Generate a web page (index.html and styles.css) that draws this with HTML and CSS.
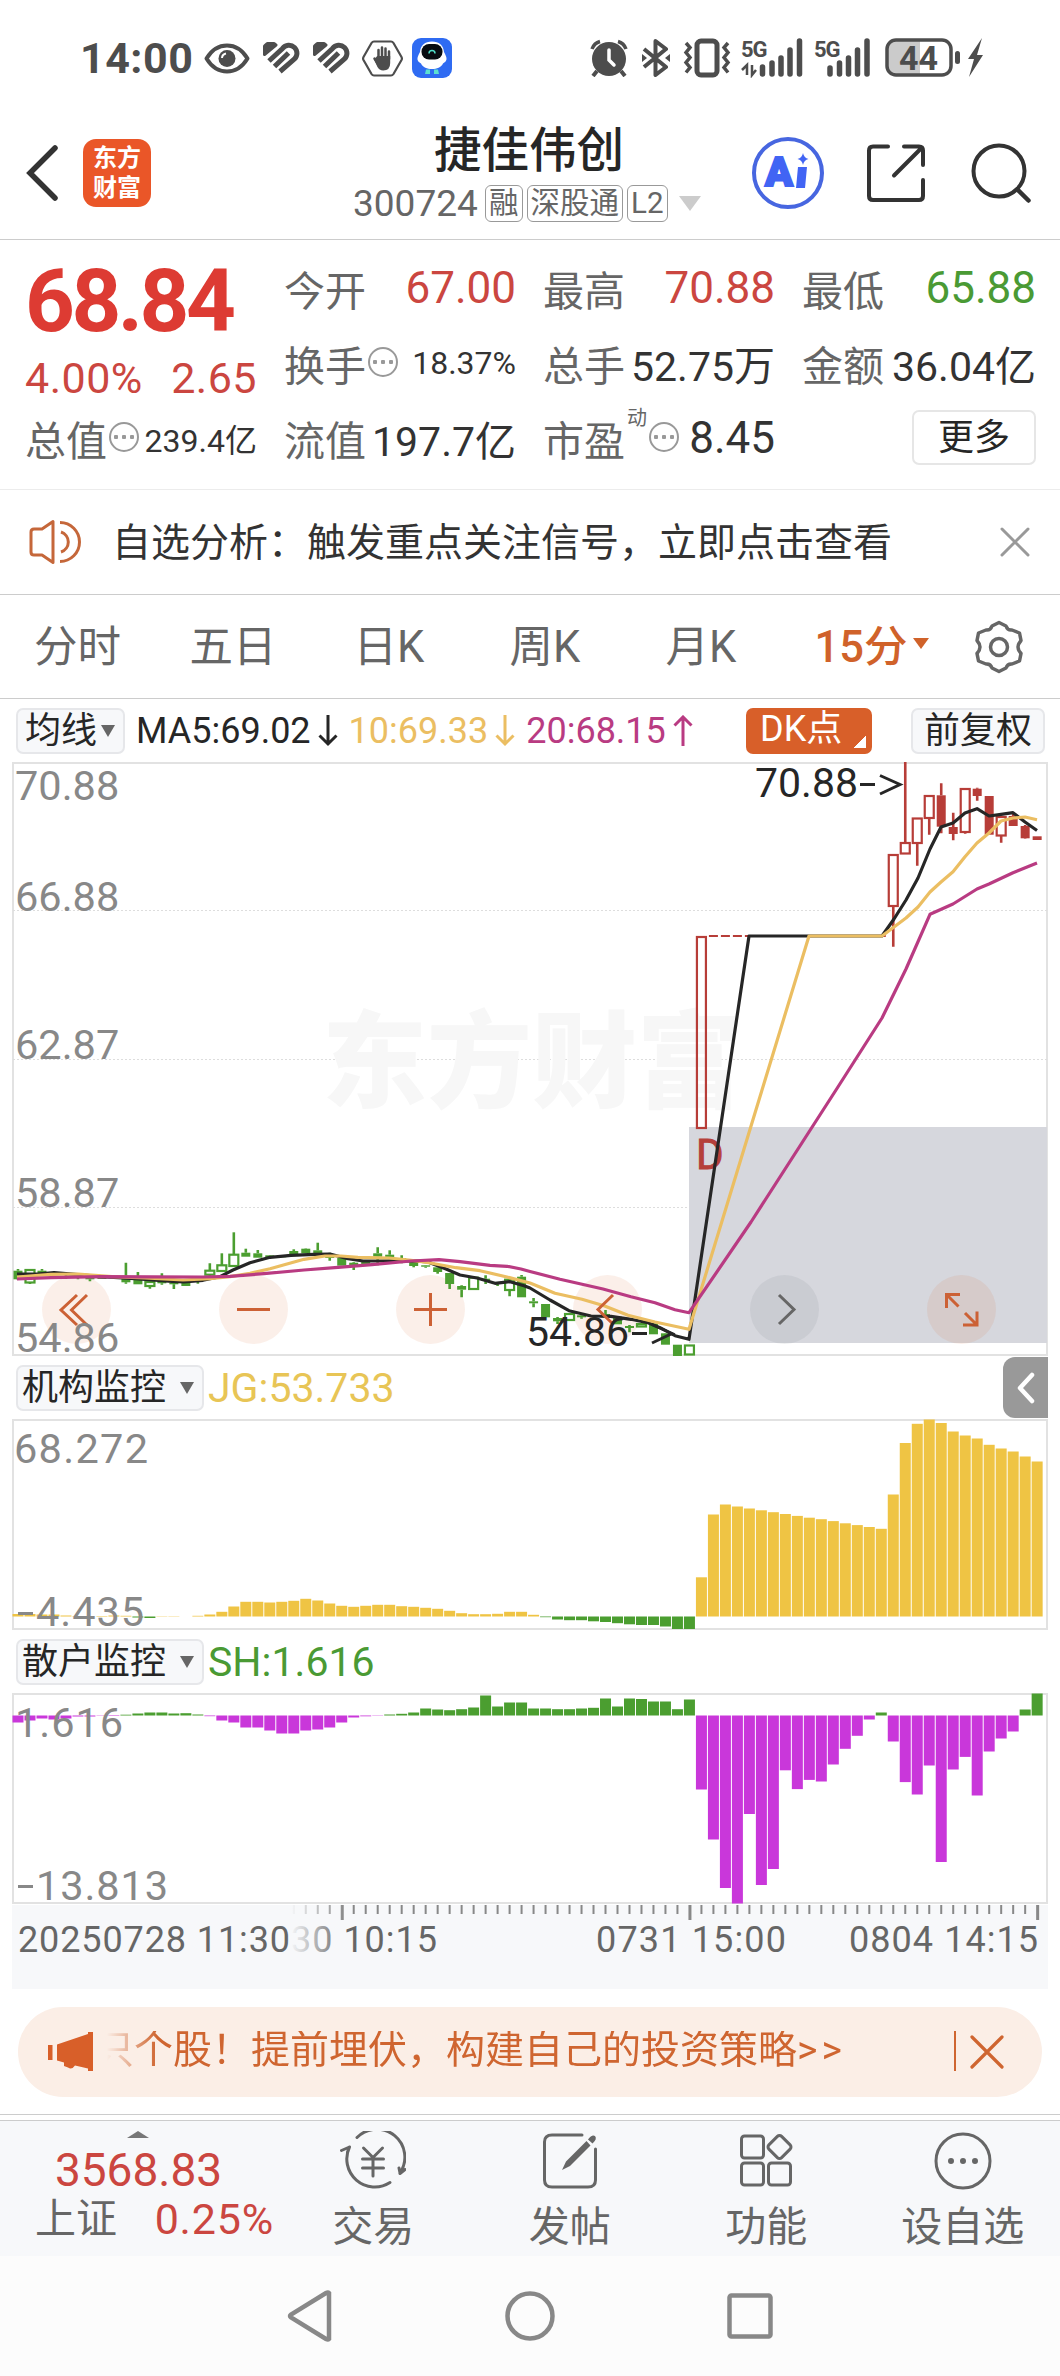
FILE: index.html
```html
<!DOCTYPE html>
<html lang="zh-CN">

<head>
  <meta charset="UTF-8">
  <meta name="viewport" content="width=device-width, initial-scale=1.0">
  <title>捷佳伟创 300724</title>

  <link rel="stylesheet" href="styles.css">
</head>

<body>
  <div class="status">
    <span class="clock">14:00</span>
    <svg class="st-eye" width="46" height="31" viewBox="0 0 46 31">
      <path d="M2.5 15.5C8 6.500 15 2.500 23 2.500s15 4 20.500 13C38 24.500 31 28.500 23 28.500S8 24.500 2.500 15.500z" fill="none" stroke="#4d4d4d" stroke-width="4" stroke-linejoin="round" />
      <circle cx="23" cy="15.500" r="8.500" fill="#4d4d4d" />
      <path d="M18 15a5 5 0 0 1 4-4.500" fill="none" stroke="#fff" stroke-width="2" />
    </svg>
    <svg class="st-heart" width="37" height="32" viewBox="0 0 37 32">
      <path d="M1.500 12.500A7.500 7.500 0 0 1 13 3z" fill="#4d4d4d" stroke="#4d4d4d" stroke-width="3" stroke-linejoin="round" />
      <path d="M6 19L19.500 6.500a8 8 0 0 1 12-1a8 8 0 0 1 0 11.500L17 29.500M11.500 24.500L25.500 11" fill="none" stroke="#4d4d4d" stroke-width="5" />
    </svg>
    <svg class="st-heart" width="37" height="32" viewBox="0 0 37 32">
      <path d="M1.500 12.500A7.500 7.500 0 0 1 13 3z" fill="#4d4d4d" stroke="#4d4d4d" stroke-width="3" stroke-linejoin="round" />
      <path d="M6 19L19.500 6.500a8 8 0 0 1 12-1a8 8 0 0 1 0 11.500L17 29.500M11.500 24.500L25.500 11" fill="none" stroke="#4d4d4d" stroke-width="5" />
    </svg>
    <svg class="st-hand" width="41" height="37" viewBox="0 0 41 37">
      <path d="M12 1.500h17q1.500 0 2.500 1.500l8 14q.8 1.500 0 3l-8 14q-1 1.500-2.500 1.500H12q-1.500 0-2.500-1.500l-8-14q-.8-1.500 0-3l8-14q1-1.500 2.500-1.500z" fill="none" stroke="#4d4d4d" stroke-width="2.200" />
      <path d="M16.500 19V10M20 18V7.500M23.500 18V8.500M27 19v-7.500M12.500 18.500l3 5" stroke="#4d4d4d" stroke-width="2.500" stroke-linecap="round" />
      <path d="M15.200 16h13v7q0 7.500-7 7.500q-4 0-6-4l-3-7z" fill="#4d4d4d" />
    </svg>
    <svg class="st-bot" width="40" height="40" viewBox="0 0 40 40">
      <rect width="40" height="40" rx="9" fill="#2f6bf2" />
      <path d="M20 3.500c7 0 11.500 4 12 10.500c4 7 3 9-1 11.500C29 29.500 25 31 20 31s-9-1.500-11-5.500C5 23 4 21 8 14C8.500 7.500 13 3.500 20 3.500z" fill="#fff" />
      <rect x="9.500" y="6" width="21" height="15.500" rx="7.500" fill="#080c12" />
      <path d="M17 15.500a3 3 0 0 1 6 0" fill="none" stroke="#4fdcc8" stroke-width="1.500" />
      <path d="M14 31.500h4v4.500h-5zM22 31.500h4l1 4.500h-5z" fill="#5ce0d0" />
    </svg>
    <span class="spacer"></span>
    <svg width="38" height="38" viewBox="0 0 38 38">
      <circle cx="19" cy="20" r="17" fill="#4d4d4d" />
      <path d="M2 10a12 12 0 0 1 8-7.500M36 10a12 12 0 0 0-8-7.500" fill="none" stroke="#4d4d4d" stroke-width="3.500" />
      <path d="M7 32l-4 5M31 32l4 5" stroke="#4d4d4d" stroke-width="4" />
      <path d="M19 11v10l5 5" fill="none" stroke="#fff" stroke-width="3.500" stroke-linecap="round" />
    </svg>
    <svg class="st-bt" width="30" height="38" viewBox="0 0 30 38">
      <path d="M3 10l22 18l-10.500 8V2L25 10L3 28" fill="none" stroke="#4d4d4d" stroke-width="4" stroke-linejoin="round" />
      <path d="M1 15l5 4l-5 4zM29 15l-5 4l5 4z" fill="#4d4d4d" />
    </svg>
    <svg class="st-vib" width="48" height="40" viewBox="0 0 48 40">
      <rect x="14" y="3" width="20" height="34" rx="4" fill="none" stroke="#4d4d4d" stroke-width="5" />
      <path d="M3 5l4 4.500l-4 5l4 5l-4 5l4 5l-4 5M45 5l-4 4.500l4 5l-4 5l4 5l-4 5l4 5" fill="none" stroke="#4d4d4d" stroke-width="3.500" />
    </svg>
    <svg class="st-net" width="62" height="40" viewBox="0 0 62 40">
      <text x="0" y="18.500" class="net">5G</text>
      <path d="M1 32l5-5v10M11 27v10l4-5" fill="none" stroke="#4d4d4d" stroke-width="2.500" />
      <path d="M21.500 29v7M31 25v11M40 20v16M49 12v24M58.500 3v33" stroke="#4d4d4d" stroke-width="5.500" stroke-linecap="round" />
    </svg>
    <svg class="st-net2" width="58" height="40" viewBox="0 0 58 40">
      <text x="0" y="18.500" class="net">5G</text>
      <path d="M16 30v6M25.500 25v11M34.500 20v16M43.500 12v24M53 3v33" stroke="#4d4d4d" stroke-width="5.500" stroke-linecap="round" />
    </svg>
    <svg class="st-bat" width="100" height="40" viewBox="0 0 100 40">
      <path d="M12 2.500h23v34H12q-9 0-9-9v-16q0-9 9-9z" fill="#cbcbcb" />
      <rect x="2" y="2" width="64" height="35" rx="9" fill="none" stroke="#4d4d4d" stroke-width="3.500" />
      <rect x="70" y="13" width="5" height="13" rx="2.500" fill="#4d4d4d" />
      <path d="M97 0L83 21h6L84 39L98 17h-6z" fill="#4d4d4d" />
      <text x="14" y="31.500" class="bat">44</text>
    </svg>
  </div>

  <header class="header">
    <svg class="back" width="32" height="56" viewBox="0 0 32 56">
      <path d="M29 3L4 28L29 53" fill="none" stroke="#333" stroke-width="5.500" stroke-linecap="round" />
    </svg>
    <div class="logo">东方<br>财富</div>
    <div class="title">
      <h1>捷佳伟创</h1>
      <div class="code">
        <span class="num">300724</span>
        <span class="tag">融</span>
        <span class="tag">深股通</span>
        <span class="tag">L2</span>
        <i class="tri"></i>
      </div>
    </div>
    <svg class="ai" width="74" height="74" viewBox="0 0 74 74">
      <circle cx="37" cy="37" r="34" fill="none" stroke="#4766e0" stroke-width="4" />
      <text x="14" y="50" class="ai-text">A</text>
      <path d="M47 31h9l-2 21h-9z" fill="#4164f4" />
      <path d="M52 17q1 5 5.500 6q-4.500 1-5.500 6q-1-5-5.500-6q4.500-1 5.500-6z" fill="#4164f4" />
    </svg>
    <svg class="share" width="60" height="60" viewBox="0 0 60 60">
      <path d="M22 3.500H7Q3 3.500 3 7.500V53Q3 57 7 57H53Q57 57 57 53V37M38 3.500H53Q57 3.500 57 7.500V22M56 4.500L28 32.500" fill="none" stroke="#333" stroke-width="4" stroke-linecap="round" />
    </svg>
    <svg class="search" width="62" height="62" viewBox="0 0 62 62">
      <circle cx="29" cy="29" r="25.500" fill="none" stroke="#333" stroke-width="4" />
      <path d="M47.500 47.500L58.500 58.500" stroke="#333" stroke-width="4.500" stroke-linecap="round" />
    </svg>
  </header>

  <section class="quote">
    <div class="price">
      <div class="last">68.84</div>
      <div class="change"><span>4.00%</span><span>2.65</span></div>
    </div>
    <div class="cell"><label>今开</label><b class="red">67.00</b></div>
    <div class="cell"><label>最高</label><b class="red">70.88</b></div>
    <div class="cell"><label>最低</label><b class="green">65.88</b></div>
    <div class="cell"><label>换手</label><i class="info"></i><b class="small">18.37%</b></div>
    <div class="cell"><label>总手</label><b class="unit">52.75万</b></div>
    <div class="cell"><label>金额</label><b class="unit">36.04亿</b></div>
    <div class="cell"><label>总值</label><i class="info"></i><b class="small">239.4亿</b></div>
    <div class="cell"><label>流值</label><b class="unit">197.7亿</b></div>
    <div class="cell"><label>市盈</label><sup>动</sup><i class="info"></i><b>8.45</b></div>
    <div class="cell"><button class="more">更多</button></div>
  </section>

  <section class="notice">
    <svg width="52" height="46" viewBox="0 0 52 46">
      <path d="M2 13q0-3 3-3h8L24 2.500v41L13 36H5q-3 0-3-3z" fill="none" stroke="#c5673a" stroke-width="3" stroke-linejoin="round" />
      <path d="M32 13a10.500 10.500 0 0 1 0 20M31 3.500a19.500 19.500 0 0 1 0 39" fill="none" stroke="#c5673a" stroke-width="3" />
    </svg>
    <p>自选分析：触发重点关注信号，立即点击查看</p>
    <svg class="close" width="32" height="32" viewBox="0 0 32 32">
      <path d="M3 3l26 26M29 3L3 29" stroke="#999" stroke-width="3" stroke-linecap="round" />
    </svg>
  </section>

  <nav class="tabs">
    <span>分时</span>
    <span>五日</span>
    <span>日K</span>
    <span>周K</span>
    <span>月K</span>
    <span class="active">15分<i></i></span>
    <svg width="54" height="54" viewBox="0 0 54 54">
      <path d="M27 2.500L34 6Q35.500 10.500 40 10L47.500 13L49 20.500Q46 24 46 27Q46 30 49 33.500L47.500 41L40 44Q35.500 43.500 34 48L27 51.500L20 48Q18.500 43.500 14 44L6.500 41L5 33.500Q8 30 8 27Q8 24 5 20.500L6.500 13L14 10Q18.500 10.500 20 6z" fill="none" stroke="#666" stroke-width="3.500" stroke-linejoin="round" />
      <circle cx="27" cy="27" r="8.500" fill="none" stroke="#666" stroke-width="3.500" />
    </svg>
  </nav>

  <div class="legend ma">
    <span class="drop short">均线<i></i></span>
    <span class="v5">MA5:69.02</span><span class="arr v5"><svg width="20" height="32" viewBox="0 0 20 32"><path d="M10 0v29M1.500 20.500L10 29l8.500-8.500" /></svg></span>
    <span class="v10">10:69.33</span><span class="arr v10"><svg width="20" height="32" viewBox="0 0 20 32"><path d="M10 0v29M1.500 20.500L10 29l8.500-8.500" /></svg></span>
    <span class="v20">20:68.15</span><span class="arr v20"><svg width="20" height="32" viewBox="0 0 20 32"><path d="M10 31V2M1.500 10.500L10 2l8.500 8.500" /></svg></span>
    <span class="dk">DK点</span>
    <span class="drop fq">前复权</span>
  </div>

  <svg id="kline" class="chart" width="1036" height="594" viewBox="12 762 1036 594">
    <rect x="13" y="763" width="1034" height="592" class="frame" />
    <path d="M13 910.500H1047M13 1059.500H1047M13 1207.500H1047" class="grid" />
    <text x="322" y="1099" class="watermark">东方财富</text>
    <rect x="689" y="1127" width="358" height="216" fill="#d6d7dd" />
    <g class="pads">
      <circle cx="76.500" cy="1309.500" r="34.500" />
      <circle cx="253.500" cy="1309.500" r="34.500" />
      <circle cx="430.500" cy="1309.500" r="34.500" />
      <circle cx="607.500" cy="1309.500" r="34.500" />
      <circle cx="784.500" cy="1309.500" r="34.500" class="off" />
      <circle cx="961.500" cy="1309.500" r="34.500" />
    </g>
    <text x="696" y="1168.500" class="dmark">D</text>
    <g id="candles"></g>
    <polyline class="line v5" points="17,1274 37,1274 54,1272.700 78,1274.700 101,1276.700 135,1278.700 152,1280 172,1281.300 184,1282 203,1280.300 220,1276.700 233,1270 250,1262.700 270,1257.300 291,1255.300 314,1254.300 330,1254 348,1258.700 363,1261 375,1261 411,1260.700 428,1262 446,1269 460,1275 477,1278 495,1283.300 510,1281.700 524,1285.700 530,1288 550,1300 569,1310.700 591,1316 611,1316.300 631,1319.300 648,1322.700 660,1327.700 675,1335.700 689,1339.300 749,936 882,936 894,919 906,900 918,878 930,849 941,827 953,823 965,813 977,808.700 989,816 1001,814.300 1013,812.700 1025,822 1037,830.500" />
    <polyline class="line v10" points="17,1277 51,1274.300 78,1274 112,1276.700 145,1278 183,1280 210,1278.700 230,1276.700 250,1273.300 270,1268.700 304,1259.300 325,1256 341,1256 358,1257.300 389,1258 409,1260 429,1262.700 456,1267.700 480,1270.700 507,1277 530,1283 555,1293.300 582,1299.300 604,1305.700 628,1315.300 655,1322 689,1329.300 809,936 882,936 894,927 906,918 918,907 930,892 941,882 953,871.700 965,856.700 977,843 989,833 1001,821 1013,818 1025,817 1037,819.700" />
    <polyline class="line v20" points="17,1279 51,1277.700 101,1276.700 203,1277 230,1276.300 264,1273.700 304,1270 338,1267.300 372,1264.700 411,1261 439,1259.700 460,1261.700 490,1265.300 507,1266.300 521,1269 530,1271.500 560,1279.300 603,1289 631,1296.700 655,1302.700 675,1309.700 689,1312.700 751,1222 836,1090 882,1018 906,969 930,914.300 953,904 977,889 989,884 1013,872.700 1037,863" />
    <g class="padicons">
      <path d="M77 1295L61 1310L77 1325M87 1295L71.500 1310L87 1325" />
      <path d="M237 1309.500h33" />
      <path d="M414 1309.500h33M430.500 1293v33" />
      <path d="M613 1295L598 1309.500L613 1324" />
      <path d="M779 1295L794 1309.500L779 1324" class="off" />
      <path d="M960 1294.500H946.500V1308M947 1295L958.500 1306.500M963 1325H977V1311.500M976.500 1324.500L965 1313" />
    </g>
    <g class="scale">
      <text x="15" y="800">70.88</text>
      <text x="15" y="911">66.88</text>
      <text x="15" y="1059">62.87</text>
      <text x="15" y="1207">58.87</text>
      <text x="15" y="1351.500">54.86</text>
    </g>
    <g class="peak">
      <text x="755" y="797">70.88</text>
      <path d="M860 784.500h15M880 775.500L900 784.500L880 794" />
      <text x="526" y="1346">54.86</text>
      <path d="M632 1333.500h15M652 1324.500L672 1333.500L652 1343" />
    </g>
  </svg>

  <div class="legend">
    <span class="drop">机构监控<i></i></span>
    <span class="val jg">JG:53.733</span>
    <span class="side">
      <svg width="20" height="32" viewBox="0 0 20 32"><path d="M16 3L4 16L16 29" fill="none" stroke="#fff" stroke-width="4.500" stroke-linecap="round" stroke-linejoin="round" /></svg>
    </span>
  </div>

  <svg class="chart" width="1036" height="211" viewBox="12 1418.500 1036 211">
    <rect x="13" y="1419.500" width="1034" height="209" class="frame" />
    <g id="jg"></g>
    <g class="scale">
      <text x="14" y="1462" textLength="134">68.272</text>
      <path d="M18 1613h15" />
      <text x="36" y="1625" textLength="108">4.435</text>
    </g>
  </svg>

  <div class="legend">
    <span class="drop">散户监控<i></i></span>
    <span class="val sh">SH:1.616</span>
  </div>

  <svg class="chart" width="1036" height="211" viewBox="12 1692.500 1036 211">
    <rect x="13" y="1693.500" width="1034" height="209" class="frame" />
    <g id="sh"></g>
    <g class="scale">
      <text x="15" y="1736" textLength="108">1.616</text>
      <path d="M18 1886h15" />
      <text x="36" y="1899" textLength="132">13.813</text>
    </g>
  </svg>

  <svg class="chart axis" width="1036" height="84" viewBox="12 1905 1036 84">
    <defs>
      <linearGradient id="fade">
        <stop offset="0" stop-color="#f7f8fa" />
        <stop offset="1" stop-color="#f7f8fa" stop-opacity="0" />
      </linearGradient>
    </defs>
    <rect x="12" y="1905" width="1036" height="84" fill="#f7f8fa" />
    <g id="ticks"></g>
    <text x="291" y="1952" textLength="146">30 10:15</text>
    <rect x="290" y="1905" width="55" height="84" fill="url(#fade)" />
    <text x="18" y="1952" textLength="272">20250728 11:30</text>
    <text x="596" y="1952" textLength="190">0731 15:00</text>
    <text x="849" y="1952" textLength="189">0804 14:15</text>
  </svg>

  <div class="ad">
    <svg width="46" height="40" viewBox="0 0 46 40">
      <path d="M0 13h4.500v15H0zM9 12.500L40 2V0h5v39h-5v-2.500L27 33.500Q24 38 20 35.500L16 34v-3.500L9 28.500z" fill="#d85f29" />
    </svg>
    <p>只个股！提前埋伏，构建自己的投资策略<span>&gt;&gt;</span></p>
    <svg class="close" width="34" height="34" viewBox="0 0 34 34">
      <path d="M2 2l30 30M32 2L2 32" stroke="#cf6530" stroke-width="3.200" stroke-linecap="round" />
    </svg>
  </div>

  <footer class="bar">
    <div class="index">
      <i></i>
      <div class="point">3568.83</div>
      <div class="row"><span>上证</span><b>0.25%</b></div>
    </div>
    <div class="item">
      <svg width="66" height="60" viewBox="0 0 66 60">
        <path d="M17 6.500A28 28 0 0 1 60 42M60 42.500l5-4M60 42l-1-5M50 51.500A28 28 0 0 1 9.500 16L1.500 19.500M9.500 16l-2 5" fill="none" />
        <path d="M23.500 17L33 26.500L42.500 17M33 26.500V45M22.500 28h21M22.500 37h21" fill="none" />
      </svg>
      <span>交易</span>
    </div>
    <div class="item">
      <svg width="56" height="60" viewBox="0 0 56 60">
        <path d="M40 4H10Q2.500 4 2.500 11V49Q2.500 56 10 56H46Q53.500 56 53.500 49V18" fill="none" />
        <path d="M20 39L24 30.500L44.500 10L48.500 14.500L28 35zM46 8.500Q50 3 53 5Q55.500 8 50.500 12.500z" class="solid" />
      </svg>
      <span>发帖</span>
    </div>
    <div class="item">
      <svg width="54" height="60" viewBox="0 0 54 60">
        <rect x="2.500" y="5" width="22" height="22" rx="3" fill="none" />
        <rect x="2.500" y="32" width="22" height="22" rx="3" fill="none" />
        <rect x="29.500" y="32" width="22" height="22" rx="3" fill="none" />
        <rect x="31.500" y="7" width="18" height="18" rx="3" fill="none" transform="rotate(45 40.500 16)" />
      </svg>
      <span>功能</span>
    </div>
    <div class="item">
      <svg width="60" height="60" viewBox="0 0 60 60">
        <circle cx="30" cy="30" r="27" fill="none" />
        <path d="M18 27a3 3 0 1 1 0 6a3 3 0 1 1 0-6M30 27a3 3 0 1 1 0 6a3 3 0 1 1 0-6M42 27a3 3 0 1 1 0 6a3 3 0 1 1 0-6" class="solid" />
      </svg>
      <span>设自选</span>
    </div>
  </footer>

  <div class="sysnav">
    <svg width="50" height="54" viewBox="0 0 50 54"><path d="M44 4V50Q43 51 41 50L6 28.500Q4 27 6 25.500L41 4Q43 3 44 4z" /></svg>
    <svg width="54" height="54" viewBox="0 0 54 54"><circle cx="27" cy="27" r="22.500" /></svg>
    <svg width="50" height="54" viewBox="0 0 50 54"><rect x="4.500" y="6.500" width="41" height="41" rx="2" /></svg>
  </div>

  <script src="chart.js"></script>
</body>

</html>
```
FILE: styles.css
```css
* {
  margin: 0;
  padding: 0;
  box-sizing: border-box;
}

body {
  width: 1060px;
  background: #fff;
  color: #333;
  font-family: Roboto, "Noto Sans CJK SC", sans-serif;
}

svg {
  display: block;
  flex-shrink: 0;
}

i {
  font-style: normal;
}

/* status bar */
.status {
  height: 116px;
  padding: 0 75px 0 80px;
  display: flex;
  align-items: center;
}

.clock {
  width: 124px;
  font-size: 43px;
  font-weight: 700;
  color: #4d4d4d;
  letter-spacing: 0.5px;
}

.st-eye {
  margin-right: 13px;
}

.st-heart {
  margin-right: 12.5px;
}

.st-hand {
  margin-right: 9px;
}

.spacer {
  flex: 1;
}

.st-bt {
  margin-left: 13px;
}

.st-vib {
  margin-left: 12px;
}

.st-net {
  margin-left: 10px;
}

.st-net2 {
  margin-left: 11px;
}

.st-bat {
  margin-left: 13px;
}

.net {
  font-size: 22px;
  font-weight: 700;
  fill: #4d4d4d;
  letter-spacing: -1px;
}

.bat {
  font-size: 34px;
  font-weight: 700;
  fill: #4d4d4d;
}

/* header */
.header {
  height: 124px;
  padding-left: 26px;
  border-bottom: 1px solid #ccc;
  display: flex;
  align-items: center;
}

.header > * {
  position: relative;
  top: -5px;
}

.logo {
  width: 68px;
  height: 68px;
  margin-left: 25px;
  padding-top: 4px;
  border-radius: 13px;
  background: #ea5628;
  color: #fff;
  font-size: 24px;
  font-weight: 700;
  line-height: 30px;
  text-align: center;
}

.title {
  width: 360px;
  height: 124px;
  margin-left: 200px;
  display: flex;
  flex-direction: column;
}

.title h1 {
  height: 73px;
  padding: 8px 0 0 83px;
  font-size: 47.5px;
  font-weight: 500;
  line-height: 64px;
  color: #262626;
}

.code {
  height: 40px;
  padding-left: 2px;
  display: flex;
  align-items: center;
  gap: 4px;
  color: #666;
}

.code .num {
  width: 128px;
  font-size: 37px;
}

.tag {
  height: 37px;
  padding: 0 3px;
  border: 1px solid #999;
  border-radius: 6px;
  font-size: 29.5px;
  line-height: 34px;
}

.tri {
  margin-left: 7px;
  border: 11px solid transparent;
  border-top: 15px solid #ccc;
  border-bottom: 0;
}

.ai {
  margin-left: 40px;
}

.ai-text {
  font-size: 41px;
  font-weight: 900;
  fill: #4164f4;
  stroke: #4164f4;
  stroke-width: 2;
}

.share {
  margin-left: 41px;
}

.search {
  margin-left: 44px;
}

/* quote */
.quote {
  height: 250px;
  padding: 10px 24px 0 25px;
  border-bottom: 1px solid #ececec;
  display: grid;
  grid-template-columns: 232px 232px 232px 234px;
  grid-template-rows: 75px 75px 75px;
  column-gap: 27px;
}

.price {
  grid-row: span 2;
  color: #cb4640;
}

.last {
  height: 101px;
  font-size: 87px;
  font-weight: 700;
  line-height: 103px;
  letter-spacing: -3.5px;
  color: #dd3b33;
}

.change {
  display: flex;
  justify-content: space-between;
  font-size: 43px;
  line-height: 54px;
  letter-spacing: 0.5px;
}

.cell {
  display: flex;
  align-items: center;
}

.cell label {
  font-size: 41px;
  color: #666;
}

.cell b {
  margin-left: auto;
  font-size: 44px;
  font-weight: 400;
}

.cell .small {
  font-size: 32px;
}

.cell .unit {
  font-size: 41px;
}

.cell sup {
  align-self: flex-start;
  margin: 2px 0 0 2px;
  font-size: 20px;
  color: #666;
}

.cell .red {
  color: #cb4640;
}

.cell .green {
  color: #4a9a34;
}

.info {
  width: 30px;
  height: 30px;
  margin: -2px 0 0 2px;
  border: 2px solid #999;
  border-radius: 50%;
  background:
    radial-gradient(circle, #999 2px, transparent 2.5px) -8px 0 / 26px 26px no-repeat,
    radial-gradient(circle, #999 2px, transparent 2.5px) 0 0 / 26px 26px no-repeat,
    radial-gradient(circle, #999 2px, transparent 2.5px) 8px 0 / 26px 26px no-repeat;
}

.more {
  width: 124px;
  height: 55px;
  margin-left: auto;
  border: 2px solid #e6e6e6;
  border-radius: 7px;
  background: #fff;
  color: #262626;
  font: inherit;
  font-size: 36px;
  line-height: 48px;
}

/* notice */
.notice {
  height: 105px;
  padding: 0 29px;
  border-bottom: 1px solid #ccc;
  display: flex;
  align-items: center;
}

.notice p {
  margin: -6px 0 0 31px;
  font-size: 39px;
}

.close {
  margin-left: auto;
}

/* period tabs */
.tabs {
  height: 104px;
  border-bottom: 1px solid #ccc;
  display: grid;
  grid-template-columns: 155px repeat(4, 156px) 186px 67px;
  align-items: center;
  justify-items: center;
  font-size: 43.5px;
  color: #666;
}

.tabs span {
  margin-top: -6px;
}

.tabs .active {
  display: flex;
  align-items: center;
  gap: 6px;
  color: #d0622a;
  font-weight: 500;
}

.tabs .active i {
  border: 8px solid transparent;
  border-top: 11px solid #d0622a;
  border-bottom: 0;
}

/* indicator rows */
.legend {
  height: 63px;
  padding: 0 12px 0 16px;
  display: flex;
  align-items: center;
}

.drop {
  width: 188px;
  height: 46px;
  padding: 0 8px 0 4px;
  border: 2px solid #e6e7ea;
  border-radius: 7px;
  background: #f7f8fa;
  display: flex;
  align-items: center;
  justify-content: space-between;
  color: #262626;
  font-size: 36px;
  line-height: 40px;
}

.drop i {
  border: 7.5px solid transparent;
  border-top: 12px solid #666;
  border-bottom: 0;
}

.drop.short {
  width: 109px;
  margin-right: 11px;
  padding-left: 7px;
}

.ma {
  font-size: 36px;
}

.ma .arr {
  margin: 0 11px 0 7px;
}

.arr svg {
  fill: none;
  stroke: currentColor;
  stroke-width: 3px;
}

.v5 {
  color: #262626;
}

.v10 {
  color: #ebbe62;
}

.v20 {
  color: #b93b82;
}

.dk {
  width: 126px;
  height: 46px;
  margin-left: auto;
  padding-left: 14px;
  border-radius: 7px;
  background: linear-gradient(135deg, transparent 50%, #fff 50%) 108px 28px / 12px 12px no-repeat #d85f29;
  color: #fff;
  line-height: 42px;
}

.drop.fq {
  width: 134px;
  margin: 0 3px 0 39px;
  padding: 0 11px;
}

.val {
  margin-left: 4px;
  font-size: 41px;
}

.jg {
  color: #e8c556;
}

.sh {
  color: #4a9a34;
}

.side {
  width: 45px;
  height: 61px;
  margin: 0 0 0 auto;
  border-radius: 12px 0 0 12px;
  background: #999;
  display: flex;
  align-items: center;
  justify-content: center;
}

/* charts */
.chart {
  margin-left: 12px;
}

.frame {
  fill: none;
  stroke: #e2e2e2;
  stroke-width: 2;
}

.grid {
  stroke: #ddd;
  stroke-dasharray: 2 2;
}

.watermark {
  font-size: 105px;
  font-weight: 900;
  fill: #f7f7f7;
}

.pads circle {
  fill: rgba(217, 98, 43, 0.1);
}

.pads .off {
  fill: rgba(120, 130, 140, 0.13);
}

.padicons {
  fill: none;
  stroke: #cc6135;
  stroke-width: 3px;
}

.padicons .off {
  stroke: #666;
}

.dmark {
  font-size: 42px;
  fill: #b5403b;
  stroke: #b5403b;
}

.line {
  fill: none;
  stroke: currentColor;
  stroke-width: 3.2px;
  stroke-linejoin: round;
}

.scale {
  font-size: 41.5px;
  fill: #888;
  stroke-width: 3px;
}

.scale path {
  stroke: #888;
}

.peak {
  font-size: 41px;
  fill: #262626;
}

.peak path {
  fill: none;
  stroke: #262626;
  stroke-width: 3px;
}

.axis {
  margin-top: 1px;
  font-size: 36px;
  fill: #666;
}

/* promo */
.ad {
  width: 1024px;
  height: 90px;
  margin: 18px 0 17px 18px;
  padding: 0 38px 0 30px;
  border-radius: 45px;
  background: #fbeee6;
  display: flex;
  align-items: center;
}

.ad p {
  flex-shrink: 0;
  width: 849px;
  height: 40px;
  margin: -2px 0 0 13px;
  border-right: 2px solid #cf6530;
  overflow: hidden;
  white-space: nowrap;
  text-indent: -12px;
  font-size: 39px;
  line-height: 38px;
  color: #cf6530;
  mask-image: linear-gradient(90deg, transparent, #000 50px);
}

.ad p span {
  letter-spacing: 4px;
}

/* bottom bar */
.bar {
  height: 142px;
  border-top: 1px solid #ccc;
  background: #f7f8fa;
  box-shadow: inset 0 5px #fff, inset 0 6px #ccc;
  display: grid;
  grid-template-columns: 275px repeat(4, 196.5px);
}

.index {
  text-align: center;
  color: #cb4640;
}

.index i {
  display: block;
  width: 22px;
  margin: 16px auto 0;
  border: 11px solid transparent;
  border-bottom: 7px solid #777;
  border-top: 0;
}

.point {
  margin-top: 5px;
  padding-left: 2px;
  font-size: 46px;
  line-height: 54px;
}

.index .row {
  padding: 0 1px 0 35px;
  margin-top: -5px;
  display: flex;
  justify-content: space-between;
  align-items: center;
  line-height: 54px;
}

.row span {
  font-size: 41px;
  color: #666;
}

.row b {
  font-size: 43px;
  font-weight: 400;
  letter-spacing: 0.8px;
}

.item {
  padding-top: 16px;
  display: flex;
  flex-direction: column;
  align-items: center;
  color: #666;
  font-size: 41px;
  line-height: 72px;
}

.item svg {
  stroke: #666;
  stroke-width: 3px;
  stroke-linejoin: round;
  stroke-linecap: round;
}

.item .solid {
  fill: #666;
  stroke: none;
}

.sysnav {
  height: 120px;
  padding: 0 285px;
  background: #fcfcfc;
  display: flex;
  align-items: center;
  justify-content: space-between;
}

.sysnav svg {
  fill: none;
  stroke: #888;
  stroke-width: 4.5px;
}
```
FILE: chart.js
```js
const NS = 'http://www.w3.org/2000/svg';
const STEP = 11.99;
const LEFT = 12.5;

function draw(parent, name, attrs) {
  const el = document.createElementNS(NS, name);
  for (const key in attrs) el.setAttribute(key, attrs[key]);
  parent.appendChild(el);
}

// [high, top, bottom, low, hollow]
const candles = [
  [1269, 1270.7, 1279.3, 1280], [1269, 1270, 1282.5, 1284, 1], [1269, 1270.7, 1273, 1273], [1272, 1272, 1274, 1274],
  [1274, 1276, 1278, 1279], [1274, 1276, 1278, 1279.3], [1276, 1276.7, 1279.3, 1281.3], [1277, 1277, 1279, 1279],
  [1276, 1276, 1278, 1278], [1262.7, 1279, 1282.3, 1283.7], [1272, 1278.7, 1284.3, 1284.3], [1281, 1282, 1286, 1288.7, 1],
  [1273.3, 1280, 1283.3, 1284.7], [1280, 1282.7, 1284.3, 1289], [1282, 1282.7, 1286, 1286], [1280, 1280, 1282, 1283.7],
  [1263.3, 1270.7, 1274.7, 1276, 1], [1253.3, 1265.3, 1271, 1271, 1], [1232.3, 1254.7, 1266, 1266, 1], [1248.7, 1252.7, 1256.7, 1256.7],
  [1250, 1253.3, 1257.7, 1257.7], [1255, 1255.3, 1257, 1257], [1255, 1255.3, 1257.3, 1257.3], [1249.3, 1251, 1254.7, 1254.7],
  [1248.3, 1248.7, 1253.3, 1253.3], [1242.7, 1250.3, 1254, 1254], [1252.7, 1254, 1258, 1260.7], [1258, 1258, 1265.7, 1265.7],
  [1262, 1262.7, 1265.3, 1270], [1262, 1262, 1264, 1264], [1247.3, 1253.3, 1256.7, 1265.3], [1250.3, 1254.7, 1258, 1258],
  [1255.3, 1258, 1260, 1263.3], [1262, 1262, 1266, 1267.3], [1265, 1265.3, 1266.7, 1267.7], [1267.3, 1267.3, 1272, 1273.7],
  [1273, 1273, 1284, 1289], [1285.3, 1286, 1289.7, 1297.3], [1277, 1277.7, 1289, 1289.7, 1], [1275.3, 1278.7, 1280.7, 1284],
  [1282, 1282.7, 1284, 1286], [1279, 1279.7, 1290, 1296.3, 1], [1275, 1276.7, 1297.3, 1297.3], [1298, 1301.3, 1303.3, 1307.3],
  [1304, 1304, 1317.3, 1317.3], [1317, 1318, 1321.3, 1324], [1313, 1314, 1320, 1320, 1], [1315, 1315.3, 1317.3, 1318.7],
  [1315, 1315.3, 1316.7, 1317], [1310, 1314, 1317.3, 1317.3], [1316, 1316.7, 1324.3, 1324.3], [1325, 1326, 1328, 1332.3],
  [1323, 1324, 1326.5, 1327, 1], [1323, 1323.3, 1334.3, 1334.3], [1333, 1333.3, 1344.7, 1344.7], [1344.7, 1344.7, 1356, 1356],
  [1345, 1345.5, 1354.5, 1355, 1], [937, 937, 1128, 1128, 1]
];
for (let i = 58; i <= 72; i++) candles.push([935, 935, 937, 937]);
candles.push(
  [854, 855, 906, 946.7, 1], [762, 843, 853.5, 854, 1], [818, 818.5, 843, 865.7, 1], [795, 796, 818, 834.7, 1],
  [783.3, 795.3, 826.7, 833.3], [812.7, 827, 834, 840.3], [788, 789, 832, 833.7, 1], [787.7, 788.7, 796, 800.7],
  [796, 796, 834.7, 834.7], [816, 817, 835.5, 842.7, 1], [813.3, 816, 826, 826], [825, 826, 838.3, 838.7],
  [836.3, 836.3, 840, 840]
);

const kline = document.getElementById('candles');
candles.forEach(([high, top, bottom, low, hollow], i) => {
  const color = i < 57 ? '#4b9e30' : '#b73d38';
  const x = LEFT + i * STEP;
  const mid = x + 5.5;
  draw(kline, 'path', { d: `M${mid} ${high}V${top}M${mid} ${bottom}V${low}`, stroke: color, 'stroke-width': 2.6 });
  if (hollow) {
    draw(kline, 'rect', { x: x + 1, y: top, width: 9, height: bottom - top, fill: 'none', stroke: color, 'stroke-width': 2.2 });
  } else {
    draw(kline, 'rect', { x: x + 1, y: top, width: 9, height: bottom - top, fill: color });
  }
});

// bar heights in px, one per 15 min
const jg = [
  2.5, 2.5, 2, 2, 1, 0.5, 0, 0.5, 1, 0.7, -1, -1.5, 0.3, 0.3, 0, 0.7, 2, 4.7, 10, 14.7, 14.7, 14, 14.7, 15.7, 17.7, 16,
  13, 10.7, 9.7, 10.7, 11.7, 11.7, 10.3, 9.7, 8.7, 7.7, 5.7, 3.3, 2.3, 2.3, 2.7, 4.7, 4.7, 1.7, -0.7, -3, -3.7, -3.7,
  -4.8, -5.5, -6.7, -7.8, -8.5, -8.5, -10, -12.5, -12.5, 39.2, 102, 112, 110, 108, 106.2, 104.3, 102.5, 100.6, 98.8,
  97.3, 95.4, 93.2, 91.4, 89.5, 87.7, 122, 173.5, 192.7, 197, 193.5, 185, 181, 178, 171.7, 168, 165, 160, 155
];

const sh = [
  -7, -5, -3, -4, -3, -1, -1, -0.3, -0.5, 0.8, 2, 3, 3, 2, 2.3, 1, -0.7, -5, -7, -12, -12, -15, -18, -18, -15, -14,
  -12, -7, -2, -0.8, -0.3, 1, 1.7, 3, 7, 6, 5.3, 6.3, 8, 20, 9, 13, 13, 7, 7, 6.3, 6.3, 7, 7.7, 17, 9, 17, 16.5, 14,
  14, 6.3, 16, -74, -124, -172.5, -188, -98.5, -169.5, -153.5, -54.8, -73.6, -64.4, -66, -49, -33.3, -20.3, -4, 3,
  -26, -66.6, -79, -50, -146.5, -54, -41.4, -80, -36, -23, -16, 6, 22
];

function bars(id, values, base, up, down) {
  const g = document.getElementById(id);
  values.forEach((v, i) => {
    draw(g, 'rect', {
      x: LEFT + i * STEP,
      y: v > 0 ? base - v : base,
      width: 11,
      height: Math.abs(v),
      fill: v > 0 ? up : down
    });
  });
}

bars('jg', jg, 1616, '#efc444', '#4b9e30');
bars('sh', sh, 1715, '#4b9e30', '#c937da');

const ticks = document.getElementById('ticks');
for (let i = 23; i < 86; i++) {
  const big = i === 27 || i === 56 || i === 85;
  draw(ticks, 'rect', { x: 17 + i * STEP, y: 1905, width: big ? 3 : 2, height: big ? 15 : 9, fill: '#888' });
}
```
